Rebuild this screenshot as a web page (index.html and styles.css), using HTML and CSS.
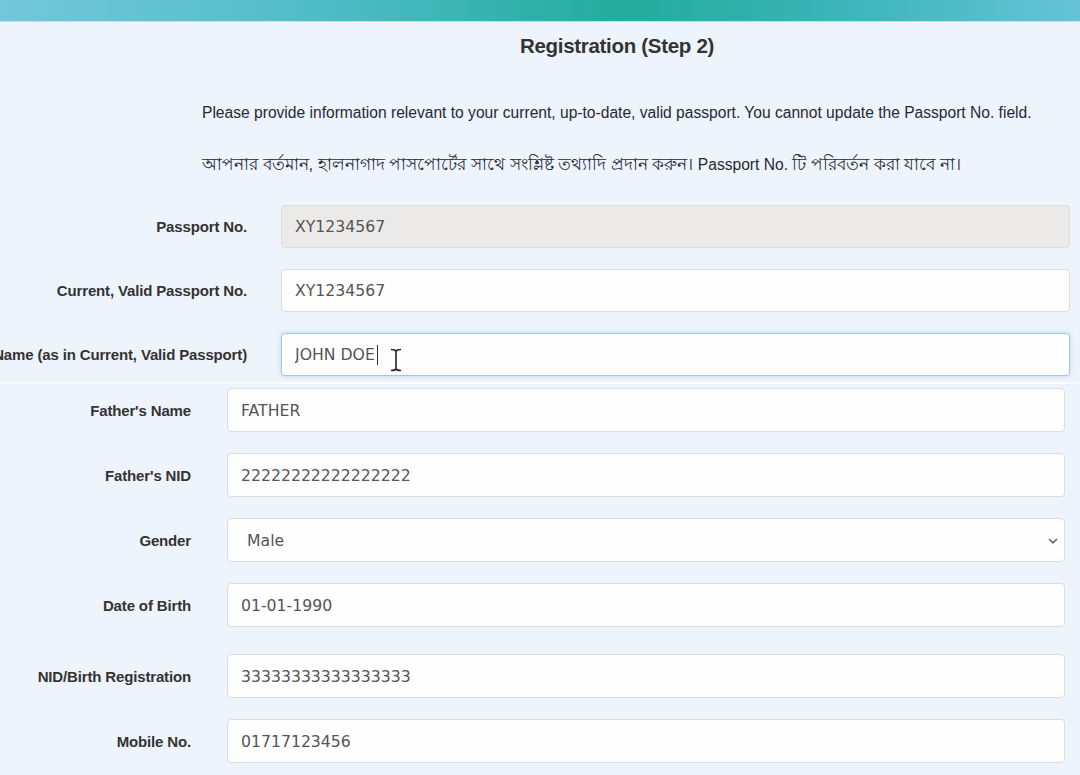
FILE: index.html
```html
<!DOCTYPE html>
<html lang="en">
  <head>
    <meta charset="UTF-8" />
    <meta name="viewport" content="width=device-width, initial-scale=1.0" />
    <title>Registration (Step 2)</title>
    <link rel="stylesheet" href="styles.css">
  </head>
  <body>
    <div class="top-bar"></div>

    <div class="page">
      <h1 class="title">Registration (Step 2)</h1>

      <p class="note">
        Please provide information relevant to your current, up-to-date, valid passport. You cannot update the Passport No. field.
      </p>
      <p class="note note-bn" lang="bn">
        <span class="bn">আপনার বর্তমান, হালনাগাদ পাসপোর্টের সাথে সংশ্লিষ্ট তথ্যাদি প্রদান করুন।</span> Passport No. <span class="bn">টি পরিবর্তন করা যাবে না।</span>
      </p>

      <!-- Passport block -->
      <div class="form form-top">
        <div class="field">
          <label class="label">Passport No.</label>
          <input class="input input-disabled" type="text" value="XY1234567" disabled />
        </div>
        <div class="field">
          <label class="label">Current, Valid Passport No.</label>
          <input class="input" type="text" value="XY1234567" />
        </div>
        <div class="field">
          <label class="label">Name (as in Current, Valid Passport)</label>
          <div class="input-wrap">
            <input class="input input-focus" type="text" value="JOHN DOE" />
            <span class="caret"></span>
            <svg class="ibeam" width="12" height="24" viewBox="0 0 12 24">
              <path d="M1 1.5 C3 1.5 5 1.5 6 3 C7 1.5 9 1.5 11 1.5 M6 3 V21 M1 22.5 C3 22.5 5 22.5 6 21 C7 22.5 9 22.5 11 22.5" fill="none" stroke="#222" stroke-width="1.6" />
            </svg>
          </div>
        </div>
      </div>
    </div>

    <!-- Personal info block -->
    <div class="page page-lower">
      <div class="form form-bottom">
        <div class="field">
          <label class="label">Father's Name</label>
          <input class="input" type="text" value="FATHER" />
        </div>
        <div class="field">
          <label class="label">Father's NID</label>
          <input class="input" type="text" value="22222222222222222" />
        </div>
        <div class="field">
          <label class="label">Gender</label>
          <div class="select-wrap">
            <select class="input select">
              <option selected>Male</option>
              <option>Female</option>
              <option>Other</option>
            </select>
            <svg class="chevron" width="12" height="8" viewBox="0 0 12 8">
              <path d="M2 2 L6 5.8 L10 2" fill="none" stroke="#666" stroke-width="1.7" />
            </svg>
          </div>
        </div>
        <div class="field">
          <label class="label">Date of Birth</label>
          <input class="input" type="text" value="01-01-1990" />
        </div>
        <div class="field field-spaced">
          <label class="label">NID/Birth Registration</label>
          <input class="input" type="text" value="33333333333333333" />
        </div>
        <div class="field">
          <label class="label">Mobile No.</label>
          <input class="input" type="text" value="01717123456" />
        </div>
      </div>
    </div>
  </body>
</html>
```

FILE: styles.css
```css
body {
  font-family: "Liberation Sans", Arial, sans-serif;
  background-color: #eef4fb;
  margin: 0;
  padding: 0;
  color: #333;
}

/* Barra superior */
.top-bar {
  height: 21px;
  background: linear-gradient(90deg, #74c7da 0%, #4fbcc6 30%, #23ab9c 58%, #3fb6bb 80%, #66c4d6 100%);
  border-bottom: 1px solid #bfe3e8;
}

.page {
  overflow: hidden;
}

.title {
  text-align: center;
  font-size: 20.5px;
  line-height: 24px;
  margin: 12px 0 0 154px;
  color: #333;
  letter-spacing: -0.3px;
}

.note {
  margin: 45px 0 0 202px;
  font-size: 15.6px;
  line-height: 20px;
  color: #25283a;
  white-space: nowrap;
}

.note-bn {
  margin-top: 31px;
  line-height: 22px;
}

.bn {
  font-size: 16.6px;
}

.form {
  display: flex;
  flex-direction: column;
  gap: 21px;
}

.form-top {
  margin-top: 29px;
  padding-right: 10px;
  padding-bottom: 6px;
}

.form-bottom {
  padding: 4px 15px 12px 0;
}

.page-lower {
  border-top: 2px solid #fafcfe;
}

.field {
  display: flex;
  align-items: center;
}

.field-spaced {
  margin-top: 6px;
}

.label {
  flex: none;
  display: flex;
  justify-content: flex-end;
  white-space: nowrap;
  font-weight: bold;
  font-size: 15px;
  color: #333;
  letter-spacing: -0.15px;
}

.form-top .label {
  width: 247px;
  margin-right: 34px;
}

.form-bottom .label {
  width: 191px;
  margin-right: 36px;
}

.input {
  flex: 1;
  box-sizing: border-box;
  height: 43px;
  width: 100%;
  padding: 0 13px;
  font-family: "DejaVu Sans", Verdana, sans-serif;
  font-size: 15.7px;
  color: #555;
  background-color: #fefefe;
  border: 1px solid #dcdcdc;
  border-radius: 4px;
  outline: none;
}

.form-bottom .input {
  height: 44px;
}

.input-disabled {
  background-color: #ebeae8;
  color: #555;
  -webkit-text-fill-color: #555;
  opacity: 1;
}

.input-focus {
  border-color: #a7c4e4;
  box-shadow: 0 0 5px rgba(102, 160, 225, 0.35);
}

.input-wrap,
.select-wrap {
  flex: 1;
  position: relative;
  display: flex;
}

/* Cursor de texto dentro del campo de nombre */
.caret {
  position: absolute;
  left: 96px;
  top: 12px;
  width: 1px;
  height: 20px;
  background-color: #333;
}

.ibeam {
  position: absolute;
  left: 109px;
  top: 15px;
}

.select {
  appearance: none;
  -webkit-appearance: none;
  padding-left: 19px;
}

.chevron {
  position: absolute;
  right: 6px;
  top: 19px;
  pointer-events: none;
}
```
